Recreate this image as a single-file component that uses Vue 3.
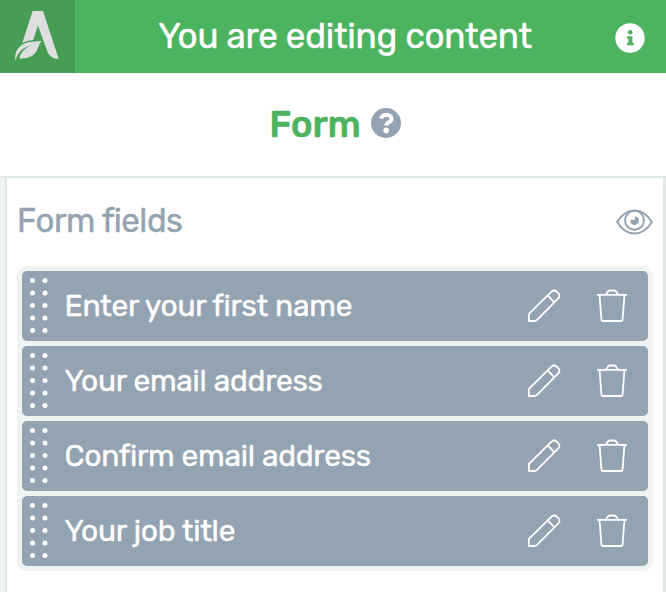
<script setup>
import { ref } from 'vue'

const fields = ref([
  { id: 1, label: 'Enter your first name' },
  { id: 2, label: 'Your email address' },
  { id: 3, label: 'Confirm email address' },
  { id: 4, label: 'Your job title' }
])
</script>

<template>
  <div class="editor">
    <header class="top-bar">
      <div class="logo">
        <svg width="75" height="73" viewBox="0 0 75 73">
          <path fill="#dedede" d="M32.600 11h10.400l15.700 47.800c-6.200.2-9.800-3-11.800-8.600L37.900 25.500l-4.700 14.600c-3.900.4-7.200 1.300-10.900 3z" />
          <path fill="#dedede" d="M15.500 60.800c-1.900-9.700 4.500-16.600 12.500-18.500 4.500-1.100 9-.4 13.700-1.200-3.200 3.300-3.400 8.300-6.700 12.200-3.600 4.200-9.200 5.700-15.800 5.200 1.500-6.500 6.300-11 13.500-13.700-9.200 2-15.300 7.600-17.200 16z" />
        </svg>
      </div>
      <h1 class="top-title">You are editing content</h1>
      <div class="info">
        <svg width="30" height="30" viewBox="0 0 30 30">
          <circle cx="15" cy="15" r="14.700" fill="#fff" />
          <circle cx="15.200" cy="9.300" r="2.300" fill="#4cb35e" />
          <path fill="#4cb35e" d="M12 13.200h5.400v6.500h1.400v2.600h-6.800v-2.600h1.400v-3.900H12z" />
        </svg>
      </div>
    </header>

    <div class="page-title">
      <h2>Form</h2>
      <svg width="30" height="30" viewBox="0 0 30 30">
        <circle cx="15" cy="15" r="15" fill="#94a3b1" />
        <path d="M9.800 10.500c1.300-2.700 3-3.700 5.400-3.700 3 0 5.300 1.700 5.300 4.100 0 3.500-5.200 3-5.200 6.600" fill="none" stroke="#fff" stroke-width="4" />
        <circle cx="15.200" cy="22.400" r="2.800" fill="#fff" />
      </svg>
    </div>

    <main class="panel">
      <div class="section-head">
        <h3>Form fields</h3>
        <svg class="eye" width="37" height="26" viewBox="0 0 37 26" fill="none" stroke="#94a3b1" stroke-width="2">
          <path d="M1.200 13C5 6.500 11 1.500 18.500 1.500S32 6.500 35.800 13C32 19.500 26 24.500 18.500 24.500S5 19.500 1.200 13z" />
          <circle cx="18.500" cy="11.300" r="9.500" />
          <path fill="#94a3b1" stroke="none" d="M19 7.200v3.600h-4.700a4.400 4.400 0 1 0 4.700-3.600z" />
        </svg>
      </div>

      <ul class="field-list">
        <li v-for="field in fields" :key="field.id" class="field">
          <svg class="handle" width="18" height="56" viewBox="0 0 18 56" fill="#fff">
            <template v-for="n in 5" :key="n">
              <circle cx="2.500" :cy="n * 12.5 - 10" r="2.500" />
              <circle cx="15" :cy="n * 12.5 - 10" r="2.500" />
            </template>
          </svg>
          <span class="label">{{ field.label }}</span>
          <svg class="pencil" width="34" height="34" viewBox="0 0 34 34" fill="none" stroke="#fff" stroke-width="1.800" stroke-linejoin="round">
            <path d="M1.900 32v-7.200L24.500 2.600c1.500-1.500 3.700-1.500 5.200 0l1.600 1.600c1.500 1.500 1.500 3.700 0 5.200L10 30.800q-1.200 1.200-2.800 1.200zM20.700 6.500l6.800 6.800" />
          </svg>
          <svg class="trash" width="32" height="34" viewBox="0 0 32 34" fill="none" stroke="#fff" stroke-width="1.800" stroke-linejoin="round">
            <path d="M1 5.800h30M3.500 5.800l2 25.200q.1 1 1.100 1h18.800q1 0 1.100-1l2-25.200M10 5.500l1.500-2.500q.8-1.500 2.500-1.500h4q1.700 0 2.500 1.500L22 5.500" />
          </svg>
        </li>
      </ul>
    </main>
  </div>
</template>

<style>
body {
  margin: 0;
  background: #fff;
}
</style>

<style scoped>
.editor {
  display: flex;
  flex-direction: column;
  width: 666px;
  height: 592px;
  overflow: hidden;
  font-family: Rubik, Roboto, "Liberation Sans", sans-serif;
  background: #fff;
}

h1,
h2,
h3 {
  margin: 0;
}

svg {
  display: block;
  flex: none;
}

.top-bar {
  display: flex;
  align-items: center;
  height: 73px;
  flex: none;
  background: #4cb35e;
}

.logo {
  width: 75px;
  height: 73px;
  background: #459e54;
}

.top-title {
  flex: 1;
  text-align: center;
  font-size: 35px;
  line-height: 73px;
  font-weight: 400;
  letter-spacing: -0.27px;
  color: #fff;
  -webkit-text-stroke: 0.4px #fff;
}

.info {
  padding: 3px 21px 0 0;
}

.page-title {
  display: flex;
  justify-content: center;
  gap: 10px;
  height: 103px;
  flex: none;
  padding-left: 4px;
  border-bottom: 2px solid #dce8e8;
}

.page-title h2 {
  font-size: 37px;
  line-height: 103px;
  font-weight: 500;
  letter-spacing: -0.3px;
  color: #4cb35e;
  -webkit-text-stroke: 0.4px #4cb35e;
}

.page-title svg {
  margin-top: 35px;
}

.panel {
  flex: 1;
  box-sizing: border-box;
  border-left: 2px solid #dce8e8;
  border-right: 2px solid #dce8e8;
  margin: 0 1px 0 5px;
  padding: 0 10px;
  box-shadow: 0 0 0 5px #eff3f2;
  clip-path: inset(0 -5px);
}

.section-head {
  display: flex;
  justify-content: space-between;
  height: 88px;
}

.section-head h3 {
  font-size: 33px;
  line-height: 86px;
  font-weight: 400;
  letter-spacing: -0.48px;
  color: #94a3b1;
  -webkit-text-stroke: 0.4px #94a3b1;
}

.eye {
  margin-top: 31px;
}

.field-list {
  display: flex;
  flex-direction: column;
  gap: 5px;
  margin: 0;
  padding: 5px;
  list-style: none;
  border-radius: 10px;
  background: #eff3f2;
}

.field {
  display: flex;
  align-items: center;
  height: 70px;
  border-radius: 5px;
  background: #94a3b1;
}

.handle {
  margin-left: 8px;
}

.label {
  flex: 1;
  margin-left: 16.5px;
  font-size: 30px;
  line-height: 70px;
  letter-spacing: -0.27px;
  white-space: nowrap;
  color: #fff;
  -webkit-text-stroke: 0.4px #fff;
}

.trash {
  margin: 0 20px 0 35px;
}
</style>
